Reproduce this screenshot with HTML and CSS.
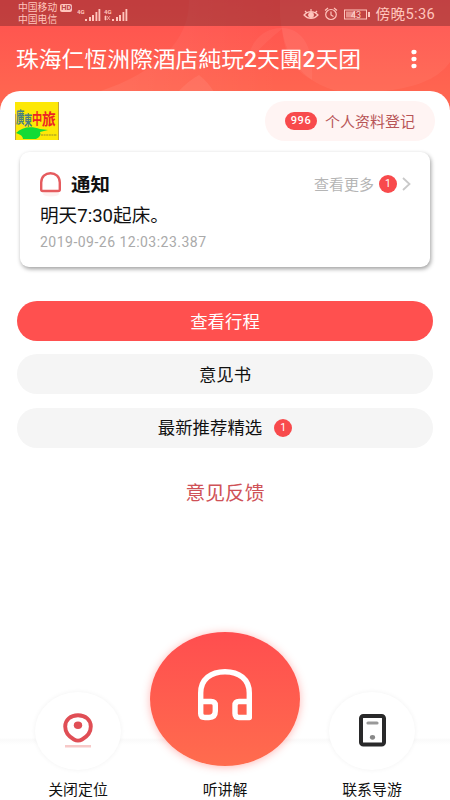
FILE: index.html
```html
<!DOCTYPE html>
<html lang="zh-CN">
<head>
<meta charset="utf-8">
<title>行程</title>
<link rel="stylesheet" href="styles.css">
</head>
<body>
<div class="screen">
  <header class="top">
    <svg class="top-art" viewBox="0 0 450 110" preserveAspectRatio="none" aria-hidden="true">
      <defs><linearGradient id="fade" x1="0" y1="0" x2="1" y2="0"><stop offset="0" stop-color="#fff" stop-opacity=".07"/><stop offset="1" stop-color="#fff" stop-opacity="0"/></linearGradient></defs>
      <path d="M189 0C190 38 160 72 98 92H280V0Z" fill="url(#fade)"/>
      <path d="M178 92Q188 81 199 75Q208 82 214 92Z" fill="#fff" opacity=".07"/>
      <path d="M248 62C250 38 267 27 283 28C302 29 314 46 312 80C291 69 284 50 282 29C268 40 257 51 248 62Z" fill="#fff" opacity=".05"/>
      <path d="M280 0C278 50 299 84 342 92H365C410 91 438 80 450 62V0Z" fill="#fff" opacity=".05"/>
    </svg>
    <div class="status">
      <div class="carriers"><span>中国移动 <b>HD</b></span><span>中国电信</span></div>
      <svg class="signals" width="52" height="16" viewBox="0 0 52 16" fill="#ffc5bd">
        <path d="M8 12h2v2H8zM12 10h2v4h-2zM15 8h2v6h-2zM18.500 5h1.800v9h-1.800zM21.500 2h1.800v12h-1.800zM35 12h2v2h-2zM39 10h2v4h-2zM42 8h2v6h-2zM45.500 5h1.800v9h-1.800zM48.500 2h1.800v12h-1.800z"/>
        <text x="0" y="7">4G</text><text x="27" y="7">4G</text><path d="M28 9h1v4h-1zM30 9l3 4M33 9l-3 4" stroke="#ffc5bd" stroke-width=".7"/>
      </svg>
      <div class="status-right">
        <svg width="16" height="14" viewBox="0 0 16 14" fill="none" stroke="#ffc5bd" stroke-width="1.200"><path d="M1 8C5 3.500 11 3.500 15 8C11 12.500 5 12.500 1 8ZM2 4l2 2M8 2v2.500M14 4l-2 2"/><circle cx="8" cy="8" r="2.300" fill="#ffc5bd"/></svg>
        <svg width="14" height="14" viewBox="0 0 14 14" fill="none" stroke="#ffc5bd" stroke-width="1.200"><ellipse cx="7" cy="7.500" rx="5.300" ry="5"/><path d="M7 4.500V8l2.500 1.500M1 3.500L4 1M13 3.500L10 1"/></svg>
        <svg class="battery" width="27" height="11" viewBox="0 0 27 11"><rect x=".5" y="1" width="22" height="9" fill="none" stroke="#ffc5bd"/><path d="M2 2.500h9v6H2z" fill="#ffc5bd" opacity=".6"/><path d="M24 3h2v5h-2z" fill="#ffc5bd"/><text x="7" y="9">43</text></svg>
        <span class="clock">傍晚5:36</span>
      </div>
    </div>
    <div class="titlebar">
      <h1>珠海仁恆洲際酒店純玩<b>2</b>天團<b>2</b>天团</h1>
      <svg class="more" width="8" height="20" viewBox="0 0 8 20" fill="#fff"><ellipse cx="4" cy="3" rx="2.600" ry="2.300"/><ellipse cx="4" cy="10" rx="2.600" ry="2.300"/><ellipse cx="4" cy="17" rx="2.600" ry="2.300"/></svg>
    </div>
  </header>
  <main class="panel">
    <div class="profile">
      <svg class="logo" width="44" height="38" viewBox="0 0 44 38">
        <rect width="44" height="38" fill="#fde807"/>
        <path d="M1 31C7 25 16 24 25 27L33 28L25 30Q27 34 21 37H8Q8 33 1 31Z" fill="#13db35"/>
        <g class="logo-text"><text class="blue" transform="translate(1 21) scale(.7 1.350)">廣</text><text class="blue" transform="translate(9 23) scale(.68 1.150)">東</text><text class="red" transform="translate(17 22) scale(.85 1.250)">中</text><text class="red" transform="translate(27 23) scale(1.150 1.300)">旅</text></g>
        <path d="M26 33h16" stroke="#978b2c" stroke-width="1.200" stroke-dasharray="2 .6"/><path d="M.5 12v26M43.500 0v38" stroke="#c2a33d"/>
      </svg>
      <div class="register"><span class="badge wide">996</span><span class="label">个人资料登记</span></div>
    </div>
    <section class="card">
      <div class="card-head">
        <svg class="bell" width="24" height="26" viewBox="0 0 24 26" fill="none"><ellipse cx="12" cy="22" rx="8" ry="2.500" fill="#fff0ef"/><path d="M2.200 17.500V10.500C2.200 4.500 6.500 1.200 11.500 1.200S20.800 4.500 20.800 10.500V17.500Q20.800 19 19.300 19H3.700Q2.200 19 2.200 17.500Z" stroke="#e55b5e" stroke-width="2.400"/></svg>
        <h2>通知</h2>
        <div class="see-more"><span class="label">查看更多</span><span class="badge">1</span><svg width="9" height="14" viewBox="0 0 9 14" fill="none" stroke="#c9c9c9" stroke-width="1.800"><path d="M1 1L7.500 7L1 13"/></svg></div>
      </div>
      <p class="message">明天7:30起床。</p>
      <p class="date">2019-09-26 12:03:23.387</p>
    </section>
    <div class="actions">
      <div class="button primary"><span class="label">查看行程</span></div>
      <div class="button"><span class="label">意见书</span></div>
      <div class="button"><span class="label">最新推荐精选</span><span class="badge">1</span></div>
    </div>
    <div class="feedback"><span class="label">意见反馈</span></div>
  </main>
  <nav class="bottom">
    <div class="nav-item">
      <div class="bubble"><svg width="32" height="38" viewBox="0 0 32 38"><path d="M3 33h26v2.500H3z" fill="#f7c9c8"/><path d="M16 3.200C23.500 3.200 28.800 8 28.800 14.500C28.800 20.500 24.500 25 20 27.500Q16 29.800 12 27.500C7.500 25 3.200 20.500 3.200 14.500C3.200 8 8.500 3.200 16 3.200Z" fill="none" stroke="#e04e55" stroke-width="3.900"/><ellipse cx="16" cy="13.200" rx="4.200" ry="3.700" fill="#e04e55"/></svg></div>
      <span class="nav-label">关闭定位</span>
    </div>
    <div class="nav-item main-item">
      <div class="bubble main-bubble"><svg width="56" height="52" viewBox="0 0 56 52" fill="none" stroke="#fff" stroke-width="5.400" stroke-linejoin="round"><path d="M3.700 33V24C3.700 10 14 2.700 28 2.700S52.300 10 52.300 24V33M3.700 32.500H14Q18.300 32.500 18.300 36.500V42Q18.300 48.500 12 48.500H8Q3.700 48.500 3.700 44.500ZM52.300 32.500H42Q38 32.500 38 36.500V44.500Q38 48.500 42 48.500H52.300Z"/></svg></div>
      <span class="nav-label">听讲解</span>
    </div>
    <div class="nav-item">
      <div class="bubble"><svg class="phone" width="27" height="33" viewBox="0 0 27 33"><rect x="2" y="2" width="23" height="28.500" rx="2.300" fill="#fff" stroke="#29292a" stroke-width="4"/><path d="M9 9h9" stroke="#999" stroke-width="3.200" stroke-linecap="round"/><ellipse cx="13.500" cy="23.300" rx="2.600" ry="2.400" fill="#888"/></svg></div>
      <span class="nav-label">联系导游</span>
    </div>
  </nav>
</div>
</body>
</html>
```
FILE: styles.css
```css
* { box-sizing: border-box; }
body { margin: 0; background: #fff; font-family: Roboto, "Noto Sans CJK SC", sans-serif; color: #111; }
h1, h2, p { margin: 0; font-weight: 400; }
svg { display: block; flex: none; }
.screen { width: 450px; height: 800px; display: flex; flex-direction: column; overflow: hidden; }
.top { height: 110px; flex: none; position: relative; background: linear-gradient(#ff504f, #ff6550 91px); }
.top-art { position: absolute; inset: 0; width: 450px; height: 110px; }
.status { position: relative; height: 26px; background: rgba(100, 32, 38, .4); display: flex; align-items: center; padding: 0 15px 0 18px; color: #ffc5bd; }
.carriers { width: 58px; display: flex; flex-direction: column; gap: 0; font-size: 9.8px; line-height: 12px; white-space: nowrap; padding-top: 2px; }
.carriers span { display: flex; align-items: center; gap: 3px; }
.carriers b { background: #ffc5bd; color: #bd4345; border-radius: 2px; font-size: 7.500px; line-height: 8px; padding: 0 1px; }
.signals { margin: 3px 0 0 1px; font-size: 6px; font-weight: 700; }
.status-right { margin-left: auto; display: flex; align-items: center; gap: 5px; padding-top: 2px; }
.battery { font-size: 9px; margin-left: 1px; }
.battery text { fill: #ffd8d0; }
.clock { font-size: 14.700px; letter-spacing: .3px; line-height: 20px; transform: scaleY(.95); }
.titlebar { position: relative; height: 65px; display: flex; align-items: center; padding: 1px 32px 0 16px; color: #fff; }
h1 { padding-top: 2px; font-family: Roboto, "Noto Sans CJK TC", sans-serif; font-size: 22.800px; line-height: 30px; white-space: nowrap; transform: scaleY(.95); }
h1 b { font-weight: 500; }
.more { margin-left: auto; }
.panel { position: relative; flex: none; height: 540px; margin-top: -19px; background: #fff; border-radius: 20px 20px 0 0; padding: 10px 17px 0; }
.profile { display: flex; justify-content: space-between; margin: 0 -2px; }
.logo { margin-top: 1px; }
.logo-text { font-size: 12px; font-weight: 700; font-family: "Noto Sans CJK TC", sans-serif; }
.blue { fill: #467d85; }
.red { fill: #ed2424; }
.register { width: 170px; height: 40px; border-radius: 20px; background: #fff4f3; display: flex; align-items: center; padding-left: 20px; gap: 8px; font-size: 15px; color: #b85557; }
.label { display: block; padding-top: 1px; transform: scaleY(.95); line-height: 24px; white-space: nowrap; }
.badge { width: 18px; height: 18px; border-radius: 50%; background: #f84a4c; color: #fff; font-size: 10.500px; line-height: 18px; text-align: center; flex: none; }
.wide { width: 32px; border-radius: 9px; font-size: 11px; font-weight: 500; letter-spacing: .6px; }
.card { margin: 11px 3px 0; height: 115px; border-radius: 9px; background: #fff; box-shadow: 1px 2px 4px rgba(0, 0, 0, .38); padding: 17px 19px 0; }
.card-head { height: 30px; display: flex; align-items: center; gap: 8px; }
.bell { margin-top: 1px; }
h2 { padding-top: 2px; font-size: 19.500px; font-weight: 700; line-height: 28px; transform: scaleY(.95); }
.see-more { margin-left: auto; display: flex; align-items: center; gap: 5px; color: #b5b5b5; font-size: 15px; }
.message { margin: 4px 0 0 1px; font-size: 18.600px; line-height: 26px; }
.date { margin: 3px 0 0 1px; font-size: 14px; letter-spacing: .48px; line-height: 20px; color: #aaa; }
.actions { margin-top: 34px; display: flex; flex-direction: column; gap: 13.300px; }
.button { height: 40px; border-radius: 20px; background: #f5f5f5; color: #111; display: flex; justify-content: center; align-items: center; gap: 12px; font-size: 17.400px; }
.primary { background: #ff504f; color: #fff; }
.feedback { margin-top: 33px; display: flex; justify-content: center; font-size: 19.800px; color: #cf5257; }
.bottom { position: relative; flex: none; height: 169px; display: grid; grid-template-columns: 156px 138px 156px; background: linear-gradient(transparent 107px, #fafafa 109px, #fff 114px); }
.nav-item { display: flex; flex-direction: column; align-items: center; justify-content: flex-end; }
.bubble { width: 86px; height: 78px; border-radius: 50%; background: #fff; box-shadow: 0 0 5px rgba(0, 0, 0, .055); display: flex; align-items: center; justify-content: center; margin-bottom: 9px; }
.bubble .phone { margin-bottom: 2px; }
.main-bubble { flex: none; width: 150px; height: 134px; background: linear-gradient(#ff4e4f, #ff6c4e); box-shadow: 0 1px 9px rgba(255, 80, 75, .4); margin-bottom: 13px; padding-bottom: 8px; }
.nav-label { padding-top: 1px; font-size: 14.900px; line-height: 20px; white-space: nowrap; }
```
